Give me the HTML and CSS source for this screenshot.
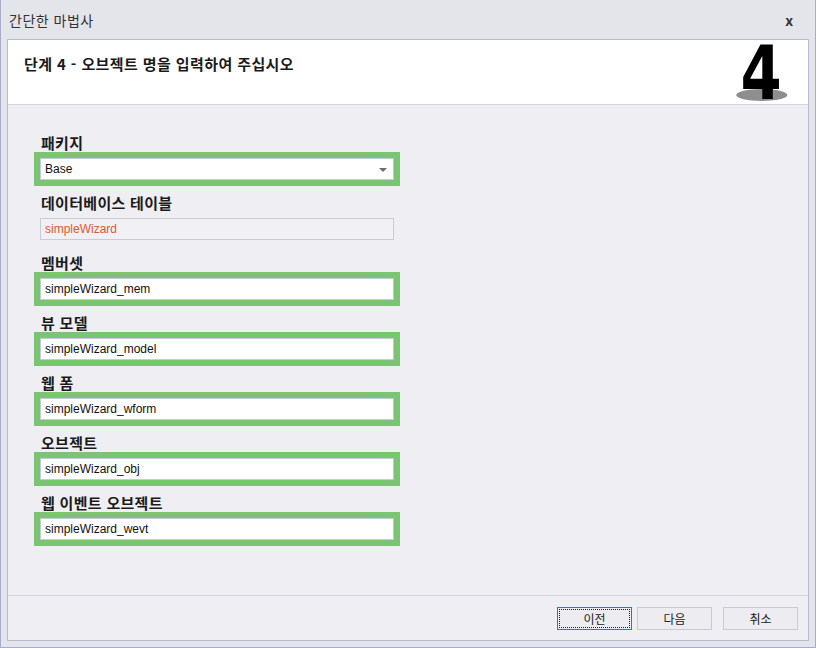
FILE: index.html
```html
<!DOCTYPE html>
<html lang="ko">

<head>
    <meta charset="UTF-8">
    <meta name="viewport" content="width=device-width, initial-scale=1.0">
    <title>간단한 마법사</title>
    <link rel="stylesheet" href="styles.css">
</head>

<body>
    <div class="window">
        <div class="titlebar">
            <span class="title">간단한 마법사</span>
            <span class="close">x</span>
        </div>

        <div class="panel">
            <div class="header">
                <h1>단계 4 - 오브젝트 명을 입력하여 주십시오</h1>
                <span class="step-badge">4</span>
            </div>

            <div class="content">
                <div class="field">
                    <label>패키지</label>
                    <div class="box active">
                        <div class="input select">Base<span class="arrow"></span></div>
                    </div>
                </div>
                <div class="field">
                    <label>데이터베이스 테이블</label>
                    <div class="box">
                        <div class="input readonly">simpleWizard</div>
                    </div>
                </div>
                <div class="field">
                    <label>멤버셋</label>
                    <div class="box active">
                        <div class="input">simpleWizard_mem</div>
                    </div>
                </div>
                <div class="field">
                    <label>뷰 모델</label>
                    <div class="box active">
                        <div class="input">simpleWizard_model</div>
                    </div>
                </div>
                <div class="field">
                    <label>웹 폼</label>
                    <div class="box active">
                        <div class="input">simpleWizard_wform</div>
                    </div>
                </div>
                <div class="field">
                    <label>오브젝트</label>
                    <div class="box active">
                        <div class="input">simpleWizard_obj</div>
                    </div>
                </div>
                <div class="field">
                    <label>웹 이벤트 오브젝트</label>
                    <div class="box active">
                        <div class="input">simpleWizard_wevt</div>
                    </div>
                </div>
            </div>

            <div class="footer">
                <button class="btn focused"><span>이전</span></button>
                <button class="btn">다음</button>
                <button class="btn cancel">취소</button>
            </div>
        </div>
    </div>
</body>

</html>
```

FILE: styles.css
```css
body {
    margin: 0;
    padding: 0;
    font-family: "Noto Sans CJK KR", "Noto Sans", sans-serif;
    color: #1e1e1e;
}

.window {
    width: 816px;
    height: 648px;
    box-sizing: border-box;
    border: 1px solid #a9abcb;
    border-top: none;
    background-color: #e4e4eb;
    display: flex;
    flex-direction: column;
}

.titlebar {
    height: 39px;
    padding: 0 22px 0 8px;
    display: flex;
    align-items: center;
    justify-content: space-between;
}

.title {
    font-size: 14px;
    letter-spacing: 0.5px;
    color: #333;
}

.close {
    font-size: 14px;
    font-weight: bold;
    color: #333;
}

.panel {
    flex: 1;
    margin: 0 6px 6px 6px;
    border: 1px solid #b9bacf;
    background-color: #eeeef3;
    display: flex;
    flex-direction: column;
}

.header {
    position: relative;
    z-index: 0;
    height: 64px;
    background-color: #fff;
    border-bottom: 1px solid #d4d4de;
    display: flex;
    justify-content: space-between;
    padding: 0 20px 0 16px;
}

.header h1 {
    margin: 14px 0 0 0;
    font-size: 15px;
    line-height: 20px;
    letter-spacing: 0.4px;
    font-weight: bold;
    color: #1a1a1a;
}

/* big step number with its shadow */
.step-badge {
    position: relative;
    width: 54px;
    font-family: "DejaVu Sans", sans-serif;
    font-weight: bold;
    font-size: 74px;
    line-height: 64px;
    text-align: center;
    color: #000;
    transform: scaleX(0.8);
    margin-top: 1px;
}

.step-badge::before {
    content: "";
    position: absolute;
    left: -4px;
    top: 48px;
    width: 64px;
    height: 12px;
    border-radius: 50%;
    background-color: #8e8e8e;
    z-index: -1;
}

.content {
    flex: 1;
    padding: 21px 0 0 26px;
    border-bottom: 1px solid #d0d0da;
}

.field label {
    display: block;
    margin-top: 8px;
    padding-left: 7px;
    font-size: 15px;
    line-height: 18px;
    letter-spacing: 0.3px;
    font-weight: bold;
    color: #1a1a1a;
}

.box {
    width: 354px;
    border: 6px solid transparent;
}

.box.active {
    border-color: #7bc474;
}

.input {
    position: relative;
    height: 20px;
    line-height: 20px;
    border: 1px solid #c6c9dc;
    background-color: #fff;
    padding-left: 4px;
    font-family: "Liberation Sans", "Noto Sans CJK KR", sans-serif;
    font-size: 12px;
    color: #111;
}

.input.readonly {
    background-color: #f1f1f5;
    border-color: #cacad8;
    color: #ec5428;
}

.arrow {
    position: absolute;
    right: 6px;
    top: 9px;
    border-left: 4px solid transparent;
    border-right: 4px solid transparent;
    border-top: 4px solid #6e6e6e;
}

.footer {
    height: 44px;
    display: flex;
    justify-content: flex-end;
    align-items: flex-start;
    padding: 11px 10px 0 0;
    box-sizing: border-box;
}

.btn {
    width: 75px;
    height: 23px;
    margin-left: 5px;
    padding: 0;
    border: 1px solid #c9c9d8;
    background-color: #ececf1;
    font-family: "Noto Sans CJK KR", sans-serif;
    font-size: 12px;
    color: #222;
}

.btn.cancel {
    margin-left: 11px;
}

.btn.focused {
    border-color: #2a78d2;
    padding: 1px;
}

.btn.focused span {
    display: block;
    height: 17px;
    line-height: 17px;
    border: 1px dotted #222;
}
```
